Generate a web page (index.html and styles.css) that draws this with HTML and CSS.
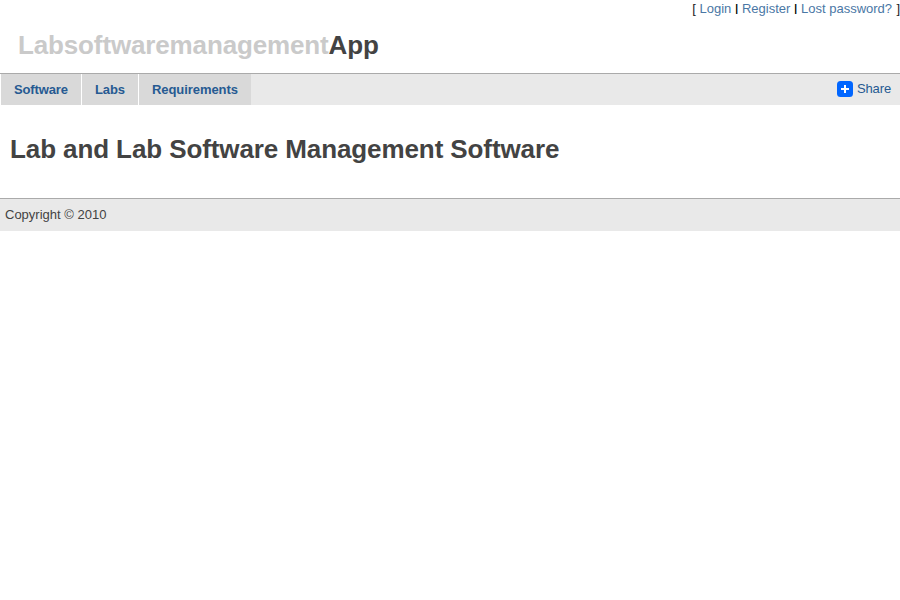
FILE: index.html
```html
<!DOCTYPE html>
<html lang="en">
<head>
<meta charset="utf-8">
<title>LabsoftwaremanagementApp</title>
<link rel="stylesheet" href="styles.css">
</head>
<body>
<div class="auth">[ <a href="#">Login</a> <span class="sep">|</span> <a href="#">Register</a> <span class="sep">|</span> <a class="lost" href="#">Lost password?</a> ]</div>
<header class="logo"><span>Labsoftwaremanagement</span>App</header>
<nav class="menu">
<a class="tab tab-software" href="#">Software</a>
<a class="tab tab-labs" href="#">Labs</a>
<a class="tab tab-requirements" href="#">Requirements</a>
<a class="share" href="#"><svg width="16" height="16" viewBox="0 0 16 16"><rect width="16" height="16" rx="3.5" fill="#0166ff"/><path d="M8 4v8M4 8h8" stroke="#fff" stroke-width="2"/></svg>Share</a>
</nav>
<main class="content"><h1>Lab and Lab Software Management Software</h1></main>
<footer class="footer">Copyright © 2010</footer>
</body>
</html>
```
FILE: styles.css
```css
body {
  margin: 0;
  background: #fff;
  color: #434343;
  font: 13px/18px "Liberation Sans", Arial, sans-serif;
}
a {
  color: #4a77a5;
  text-decoration: none;
}
.auth {
  height: 18px;
  text-align: right;
  color: #222;
}
.lost {
  margin-right: 0.7px;
}
.sep {
  display: inline-block;
  width: 3.4px;
  color: #000;
  font-size: 10px;
  font-weight: bold;
  line-height: 10px;
  text-align: center;
  vertical-align: 1px;
}
.logo {
  height: 55px;
  padding-left: 18px;
  font-size: 26px;
  font-weight: bold;
  letter-spacing: -0.14px;
  line-height: 55px;
}
.logo span {
  color: #cacaca;
}
.menu {
  display: flex;
  height: 31px;
  border-top: 1px solid #aaa;
  background: #e9e9e9;
}
.tab {
  box-sizing: border-box;
  padding-left: 13px;
  border-left: 1px solid #fff;
  background: #d9d9d9;
  color: #265a92;
  font-weight: bold;
  letter-spacing: -0.13px;
  line-height: 32px;
}
.tab-software {
  width: 81px;
}
.tab-labs {
  width: 57px;
}
.tab-requirements {
  width: 113px;
  letter-spacing: -0.07px;
}
.share {
  display: flex;
  align-items: center;
  gap: 4px;
  margin-left: auto;
  padding: 0 9px 1px 0;
  color: #265a92;
  letter-spacing: -0.12px;
}
.content {
  height: 93px;
  padding: 0 10px;
}
.content h1 {
  margin: 0;
  font-size: 26px;
  letter-spacing: -0.1px;
  line-height: 88px;
}
.footer {
  height: 32px;
  padding-left: 5px;
  border-top: 1px solid #aaa;
  background: #e9e9e9;
  line-height: 32px;
}
```
